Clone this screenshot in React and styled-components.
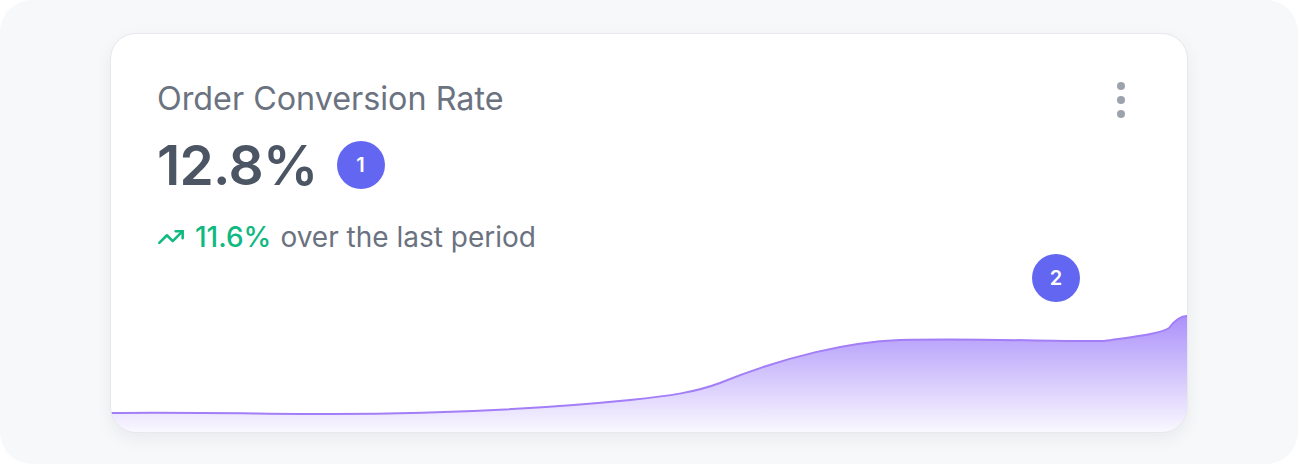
import React from "react";
import styled, { createGlobalStyle } from "styled-components";
import { TrendingUp } from "lucide-react";

const GlobalStyle = createGlobalStyle`
  html, body {
    margin: 0;
    padding: 0;
    background: #ffffff;
  }
  body {
    font-family: Inter, "Noto Sans", sans-serif;
  }
`;

const Page = styled.div`
  width: 1298px;
  height: 464px;
  box-sizing: border-box;
  background: #f7f8fa;
  border-radius: 32px;
  display: flex;
  align-items: center;
  justify-content: center;
`;

const Card = styled.div`
  position: relative;
  width: 1078px;
  height: 400px;
  box-sizing: border-box;
  background: #ffffff;
  border: 1px solid #e7e8ec;
  border-radius: 26px;
  box-shadow: 0 6px 18px rgba(17, 24, 39, 0.06);
  overflow: hidden;
  padding: 46px 48px 0 46px;
  margin-top: 2px;
`;

const Header = styled.div`
  display: flex;
  justify-content: space-between;
  align-items: flex-start;
`;

const Title = styled.h3`
  margin: 0;
  font-size: 32.3px;
  line-height: 38px;
  font-weight: 400;
  color: #6b7280;
`;

const MenuButton = styled.button`
  border: 0;
  background: none;
  padding: 2px 0 0;
  margin-right: 14px;
  display: flex;
  flex-direction: column;
  gap: 6px;
  cursor: pointer;
`;

const Dot = styled.span`
  width: 8px;
  height: 8px;
  border-radius: 50%;
  background: #9ca3af;
`;

const ValueRow = styled.div`
  display: flex;
  align-items: center;
  gap: 19px;
  margin-top: 15px;
`;

const Value = styled.div`
  font-size: 55px;
  line-height: 64px;
  font-weight: 600;
  color: #4b5563;
  letter-spacing: -0.7px;
`;

const Badge = styled.span`
  width: 48px;
  height: 48px;
  border-radius: 50%;
  background: #6366f1;
  color: #ffffff;
  font-size: 20px;
  font-weight: 600;
  display: flex;
  align-items: center;
  justify-content: center;
  flex: none;
`;

const FloatingBadge = styled(Badge)`
  position: absolute;
  left: ${(p) => p.$left}px;
  top: ${(p) => p.$top}px;
  z-index: 2;
`;

const Trend = styled.div`
  display: flex;
  align-items: center;
  gap: 9px;
  margin-top: 22px;
  font-size: 28px;
  line-height: 36px;
  color: #6b7280;
`;

const Up = styled.span`
  display: flex;
  align-items: center;
  gap: 10px;
  color: #10b981;
  font-weight: 500;
`;

const ChartWrap = styled.div`
  position: absolute;
  left: 0;
  right: 0;
  bottom: 0;
  height: 120px;

  svg {
    display: block;
    width: 100%;
    height: 100%;
  }
`;

const linePath =
  "M0 101 C 80 100, 160 102, 220 102 C 320 102, 420 98, 520 88 C 560 84, 586 80, 610 71 C 676 44, 740 30, 790 28 C 880 26, 950 30, 995 29 C 1030 24, 1050 22, 1060 16 C 1066 8, 1072 4, 1078 4";

const Chart = () => (
  <ChartWrap>
    <svg viewBox="0 0 1078 120" preserveAspectRatio="none">
      <defs>
        <linearGradient id="areaFill" x1="0" y1="0" x2="0" y2="1">
          <stop offset="0%" stopColor="#a78bfa" stopOpacity="0.95" />
          <stop offset="100%" stopColor="#a78bfa" stopOpacity="0.06" />
        </linearGradient>
      </defs>
      <path d={`${linePath} L 1078 120 L 0 120 Z`} fill="url(#areaFill)" />
      <path d={linePath} fill="none" stroke="#a37ef7" strokeWidth="2" />
    </svg>
  </ChartWrap>
);

export default function App() {
  return (
    <>
      <GlobalStyle />
      <Page>
        <Card>
          <Header>
            <Title>Order Conversion Rate</Title>
            <MenuButton aria-label="More options">
              <Dot />
              <Dot />
              <Dot />
            </MenuButton>
          </Header>
          <ValueRow>
            <Value>12.8%</Value>
            <Badge>1</Badge>
          </ValueRow>
          <Trend>
            <Up>
              <TrendingUp size={28} strokeWidth={2.2} />
              11.6%
            </Up>
            over the last period
          </Trend>
          <FloatingBadge $left={921} $top={220}>
            2
          </FloatingBadge>
          <Chart />
        </Card>
      </Page>
    </>
  );
}
